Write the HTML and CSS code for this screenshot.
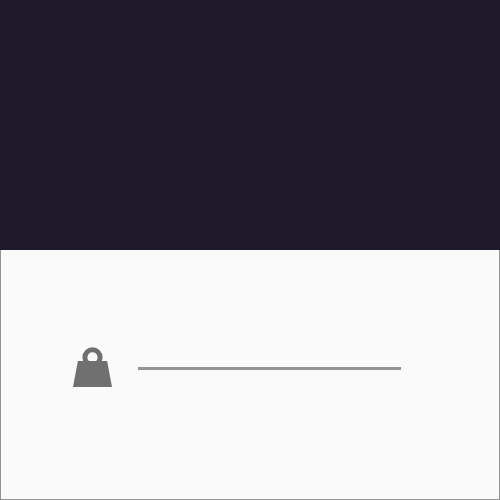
FILE: index.html
```html
<!DOCTYPE html>
<html lang="en">
<head>
<meta charset="utf-8">
<title>Weight</title>
<link rel="stylesheet" href="styles.css">
</head>
<body>
<div class="backdrop"></div>
<main class="panel">
<svg class="weight" viewBox="0 0 39 40" aria-hidden="true">
<circle class="ring" cx="19.5" cy="10.4" r="7.6"/>
<path class="body" d="M4.9 14H34.1L39 40H0Z"/>
</svg>
<div class="track"></div>
</main>
</body>
</html>
```
FILE: styles.css
```css
body {
  margin: 0;
  height: 100vh;
  display: grid;
  grid-template-rows: 1fr 1fr;
  overflow: hidden;
}

.backdrop {
  background: #1e1a2b;
}

.panel {
  box-sizing: border-box;
  display: flex;
  align-items: flex-start;
  gap: 26px;
  padding: 97px 98px 0 72px;
  background: #fafafa;
  border: 1px solid #949494;
  border-top: 0;
}

.weight {
  flex: none;
  width: 39px;
  height: 40px;
}

.ring {
  fill: none;
  stroke: #707070;
  stroke-width: 5;
}

.body {
  fill: #707070;
}

.track {
  flex: 1;
  height: 3px;
  margin-top: 20px;
  background: #949494;
}
```
